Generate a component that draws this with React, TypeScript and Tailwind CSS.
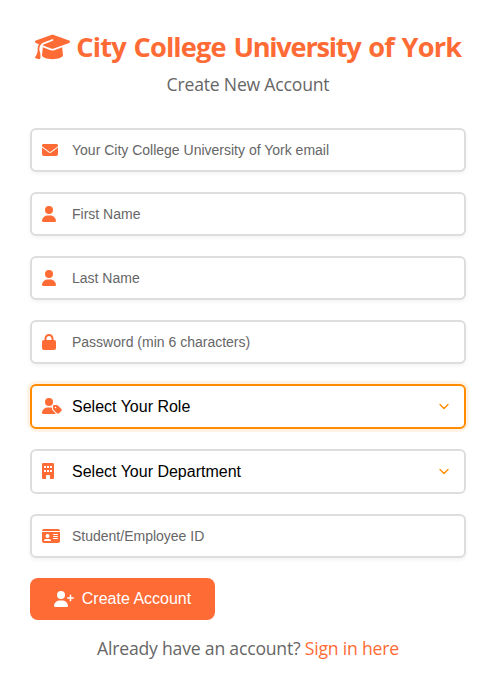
import type { ReactNode } from "react";
import {
  FaEnvelope,
  FaGraduationCap,
  FaIdCard,
  FaLock,
  FaUser,
  FaUserPlus,
  FaUserTag,
} from "react-icons/fa6";

const shell =
  "flex w-full items-center rounded-md border-2 bg-white pl-[10px] pr-[14px]";

function IconSlot({ children }: { children: ReactNode }) {
  return <span className="flex w-[30px] shrink-0 text-[#ff6b35]">{children}</span>;
}

function BuildingIcon() {
  return (
    <svg className="h-4 w-3" viewBox="0 0 12 16" fill="currentColor" fillRule="evenodd">
      <path d="M1 0h10a1 1 0 0 1 1 1v14a1 1 0 0 1-1 1H8v-3a1 1 0 0 0-1-1H5a1 1 0 0 0-1 1v3H1a1 1 0 0 1-1-1V1a1 1 0 0 1 1-1zM2 3v2h2V3zM5 3v2h2V3zM8 3v2h2V3zM2 7v2h2V7zM5 7v2h2V7zM8 7v2h2V7z" />
    </svg>
  );
}

function TextField({ icon, placeholder, type = "text" }: { icon: ReactNode; placeholder: string; type?: string }) {
  return (
    <label className={`${shell} h-11 border-[#dddddd] shadow-[0_2px_4px_rgba(0,0,0,0.05)]`}>
      <IconSlot>{icon}</IconSlot>
      <input
        type={type}
        placeholder={placeholder}
        className="min-w-0 flex-1 bg-transparent text-[14px] leading-4 outline-none placeholder:text-[#666666]"
      />
    </label>
  );
}

function SelectField({ icon, label, active = false }: { icon: ReactNode; label: string; active?: boolean }) {
  const state = active
    ? "border-[#ff8c00] shadow-[0_0_0_3px_rgba(255,140,0,0.1)]"
    : "border-[#dddddd]";
  return (
    <button type="button" className={`${shell} h-[45px] text-left ${state}`}>
      <IconSlot>
        <span className="flex pb-px">{icon}</span>
      </IconSlot>
      <span className="flex-1 text-[16px] leading-[18px] text-black">{label}</span>
      <svg width="12" height="12" viewBox="0 0 12 12" fill="none" stroke="#ff8c00" strokeWidth="1.4" strokeLinecap="round" strokeLinejoin="round">
        <path d="M2 3.4 6 7.4 10 3.4" />
      </svg>
    </button>
  );
}

export default function App() {
  return (
    <main className="flex h-[688px] w-[496px] flex-col bg-white px-[30px] pt-[28px] font-['Liberation_Sans',Arial,sans-serif]">
      <header className="flex flex-col items-center font-['Open_Sans','Noto_Sans',sans-serif]">
        <h1 className="flex h-[38px] items-center gap-[6.5px] whitespace-nowrap text-[27.2px] font-bold leading-[38px] tracking-[-0.86px] text-[#ff6b35]">
          <FaGraduationCap className="h-7 w-[35px]" />
          <span className="[word-spacing:1.5px]">
            City College <span className="tracking-[-1.25px]">University</span> of York
          </span>
        </h1>
        <p className="mt-[6px] h-6 whitespace-nowrap text-[17.6px] leading-6 tracking-[-0.2px] text-[#666666]">
          <span>Create New Account</span>
        </p>
      </header>
      <form className="mt-[32px] flex flex-col items-start gap-5">
        <TextField icon={<FaEnvelope size={16} />} placeholder="Your City College University of York email" type="email" />
        <TextField icon={<FaUser className="h-4 w-[14px]" />} placeholder="First Name" />
        <TextField icon={<FaUser className="h-4 w-[14px]" />} placeholder="Last Name" />
        <TextField icon={<FaLock className="h-4 w-[14px]" />} placeholder="Password (min 6 characters)" type="password" />
        <SelectField icon={<FaUserTag className="h-4 w-5" />} label="Select Your Role" active />
        <SelectField icon={<BuildingIcon />} label="Select Your Department" />
        <TextField icon={<FaIdCard className="h-4 w-[18px]" />} placeholder="Student/Employee ID" />
        <button type="button" className="flex h-[42px] w-[185px] items-center justify-center gap-2 rounded-lg bg-[#ff6b35] text-[16px] text-white">
          <FaUserPlus className="h-4 w-5" />
          <span>Create Account</span>
        </button>
      </form>
      <p className="mt-4 whitespace-nowrap text-center font-['Open_Sans','Noto_Sans',sans-serif] text-[17.6px] leading-6 tracking-[-0.2px] text-[#666666]">
        Already have an account? <a href="#" className="text-[#ff6b35]">Sign in here</a>
      </p>
    </main>
  );
}
